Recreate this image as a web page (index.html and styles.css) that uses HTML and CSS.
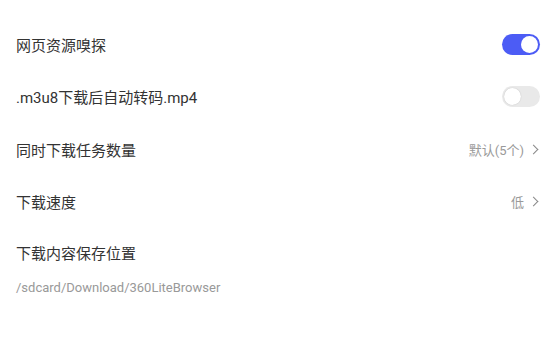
FILE: index.html
```html
<!DOCTYPE html>
<html lang="zh-CN">
<head>
  <meta charset="UTF-8" />
  <title>下载设置</title>
  <link rel="stylesheet" href="styles.css">
</head>
<body>
  <div class="settings">
    <div class="row">
      <span class="label">网页资源嗅探</span>
      <span class="switch on"><span class="knob"></span></span>
    </div>
    <div class="row">
      <span class="label">.m3u8下载后自动转码.mp4</span>
      <span class="switch"><span class="knob"></span></span>
    </div>
    <div class="row">
      <span class="label">同时下载任务数量</span>
      <span class="value">默认(5个)<span class="chevron"></span></span>
    </div>
    <div class="row">
      <span class="label">下载速度</span>
      <span class="value">低<span class="chevron"></span></span>
    </div>
    <div class="row path-row">
      <span class="label">下载内容保存位置</span>
      <span class="path">/sdcard/Download/360LiteBrowser</span>
    </div>
  </div>
</body>
</html>
```

FILE: styles.css
```css
body {
  margin: 0;
  padding: 0;
  background-color: #fff;
  font-family: Roboto, "Noto Sans CJK SC", sans-serif;
  color: #333;
}
.settings {
  padding: 18px 5px 0 16px;
}
.row {
  display: flex;
  align-items: center;
  justify-content: space-between;
  height: 52.5px;
}
.label {
  font-size: 15px;
}
.switch {
  position: relative;
  width: 38px;
  height: 21px;
  border-radius: 11px;
  background-color: #e9e9e9;
}
.switch.on {
  background-color: #4c5cf5;
}
.knob {
  position: absolute;
  top: 2px;
  left: 2px;
  width: 17px;
  height: 17px;
  border-radius: 50%;
  background-color: #fff;
  box-shadow: 0 0 1px rgba(0, 0, 0, 0.25);
}
.switch.on .knob {
  left: 19px;
  box-shadow: none;
}
.value {
  display: flex;
  align-items: center;
  font-size: 13px;
  color: #9a9a9a;
}
.chevron {
  width: 6px;
  height: 6px;
  margin: 0 3px 0 6px;
  border-top: 1.5px solid #888;
  border-right: 1.5px solid #888;
  transform: rotate(45deg);
}
.path-row {
  flex-direction: column;
  align-items: flex-start;
  justify-content: flex-start;
  height: auto;
  padding-top: 14px;
}
.path {
  margin-top: 17px;
  font-size: 13px;
  color: #999;
}
```
